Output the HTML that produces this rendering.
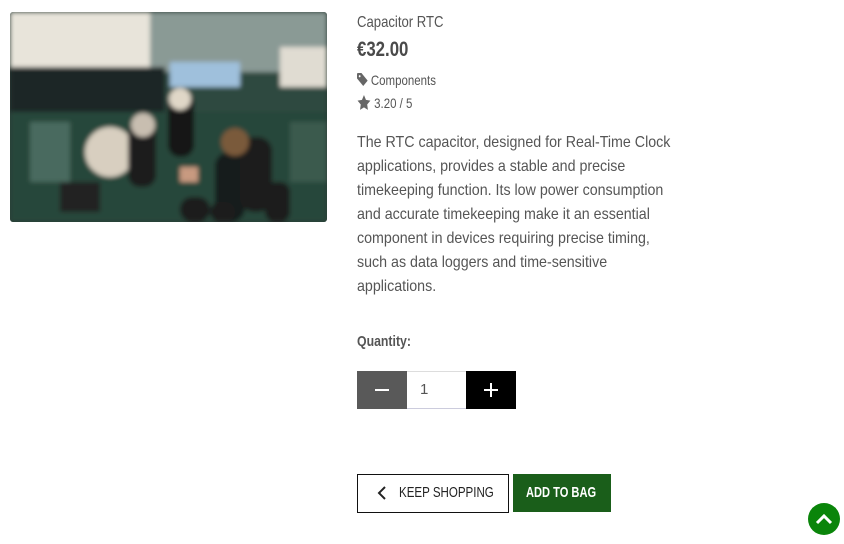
<!DOCTYPE html>
<html><head><meta charset="utf-8"><style>
*{margin:0;padding:0;box-sizing:border-box}
body{width:844px;height:544px;background:#fff;font-family:"Liberation Sans",sans-serif;color:#555;position:relative;overflow:hidden}
.a{position:absolute;white-space:nowrap}
</style></head><body>
<div class="a" style="left:10px;top:12px;width:317px;height:210px;border-radius:3px;overflow:hidden;background:#2a3a34">
<svg width="317" height="210" viewBox="0 0 317 210">
<defs><filter id="b"><feGaussianBlur stdDeviation="2.5"/></filter></defs>
<g filter="url(#b)">
<rect x="0" y="0" width="317" height="210" fill="#2f4a3f"/>
<rect x="0" y="0" width="140" height="55" fill="#e8e4da"/>
<rect x="140" y="0" width="177" height="60" fill="#8a9a95"/>
<rect x="270" y="35" width="47" height="40" fill="#e0dcd2"/>
<rect x="0" y="55" width="155" height="45" fill="#1e2628"/>
<rect x="160" y="50" width="70" height="25" fill="#9fc0dc"/>
<rect x="0" y="100" width="317" height="110" fill="#27463a"/>
<rect x="20" y="110" width="40" height="60" fill="#4a6a5e"/>
<rect x="50" y="170" width="40" height="30" fill="#222"/>
<circle cx="100" cy="140" r="25" fill="#d8cfc0"/>
<rect x="118" y="110" width="28" height="65" rx="12" fill="#1a1c1c"/>
<rect x="158" y="80" width="26" height="65" rx="12" fill="#151717"/>
<circle cx="170" cy="87" r="11" fill="#e0d7c7"/>
<circle cx="133" cy="113" r="12" fill="#c8beb0"/>
<rect x="205" y="140" width="30" height="70" rx="14" fill="#181a1a"/>
<rect x="230" y="125" width="32" height="75" rx="14" fill="#1c1e1e"/>
<circle cx="225" cy="130" r="14" fill="#7a5a3a"/>
<rect x="170" y="185" width="30" height="25" rx="12" fill="#1d1f1f"/>
<rect x="200" y="190" width="25" height="20" rx="10" fill="#1d1f1f"/>
<rect x="255" y="170" width="25" height="40" rx="10" fill="#1a1c1c"/>
<rect x="170" y="155" width="18" height="15" fill="#c89a80"/>
<rect x="280" y="110" width="37" height="60" fill="#3a5a4e"/>
</g></svg></div>

<div class="a" style="left:357px;top:14px;font-size:16px;color:#555;transform:scaleX(0.82);transform-origin:0 0">Capacitor RTC</div>
<div class="a" style="left:357px;top:38px;font-size:21px;font-weight:bold;color:#4a4a4a;transform:scaleX(0.8);transform-origin:0 0">€32.00</div>
<div class="a" style="left:357px;top:72px;font-size:14px;color:#555;transform:scaleX(0.82);transform-origin:0 0">
<svg width="13" height="13" viewBox="0 0 12 12" style="vertical-align:-1px"><path d="M0 1a1 1 0 011-1h4l7 7-5 5-7-7z" fill="#666"/><circle cx="3" cy="3" r="1" fill="#fff"/></svg> Components</div>
<div class="a" style="left:357px;top:95px;font-size:14px;color:#555;transform:scaleX(0.82);transform-origin:0 0">
<svg width="17" height="15" viewBox="0 0 24 23" style="vertical-align:-2px"><path d="M12 0l3.7 7.5 8.3 1.2-6 5.8 1.4 8.3L12 18.9l-7.4 3.9L6 14.5 0 8.7l8.3-1.2z" fill="#666"/></svg> 3.20 / 5</div>

<div class="a" style="left:357px;top:131px;font-size:16px;line-height:24px;color:#555;transform:scaleX(0.89);transform-origin:0 0">The RTC capacitor, designed for Real-Time Clock<br>applications, provides a stable and precise<br>timekeeping function. Its low power consumption<br>and accurate timekeeping make it an essential<br>component in devices requiring precise timing,<br>such as data loggers and time-sensitive<br>applications.</div>

<div class="a" style="left:357px;top:333px;font-size:15px;font-weight:bold;color:#555;transform:scaleX(0.82);transform-origin:0 0">Quantity:</div>
<div class="a" style="left:357px;top:371px;width:50px;height:38px;background:#595959"><div style="position:absolute;left:18px;top:18px;width:14px;height:2px;background:#fff"></div></div>
<div class="a" style="left:407px;top:371px;width:59px;height:38px;border-top:1px solid #ddd;border-bottom:1px solid #ccd;font-size:15px;line-height:36px;padding-left:13px;color:#555">1</div>
<div class="a" style="left:466px;top:371px;width:50px;height:38px;background:#000"><div style="position:absolute;left:18px;top:18px;width:14px;height:2px;background:#fff"></div><div style="position:absolute;left:24px;top:12px;width:2px;height:14px;background:#fff"></div></div>

<div class="a" style="left:357px;top:474px;width:152px;height:39px;border:1.5px solid #111;color:#222">
<span style="position:absolute;left:41px;top:0;font-size:15px;line-height:36px;transform:scaleX(0.77);transform-origin:0 0">KEEP SHOPPING</span>
<svg width="10" height="14" viewBox="0 0 10 14" style="position:absolute;left:19px;top:11px"><path d="M8 1L2 7l6 6" stroke="#222" stroke-width="2" fill="none"/></svg></div>
<div class="a" style="left:513px;top:474px;width:98px;height:38px;background:#1a5e1a;color:#fff">
<span style="position:absolute;left:13px;top:0;font-size:15px;font-weight:bold;line-height:38px;transform:scaleX(0.74);transform-origin:0 0">ADD TO BAG</span></div>

<div class="a" style="left:808px;top:503px;width:32px;height:32px;border-radius:50%;background:#0a850a">
<svg width="32" height="32" viewBox="0 0 32 32"><path d="M9 20l7-7 7 7" stroke="#fff" stroke-width="3" fill="none"/></svg></div>
</body></html>
